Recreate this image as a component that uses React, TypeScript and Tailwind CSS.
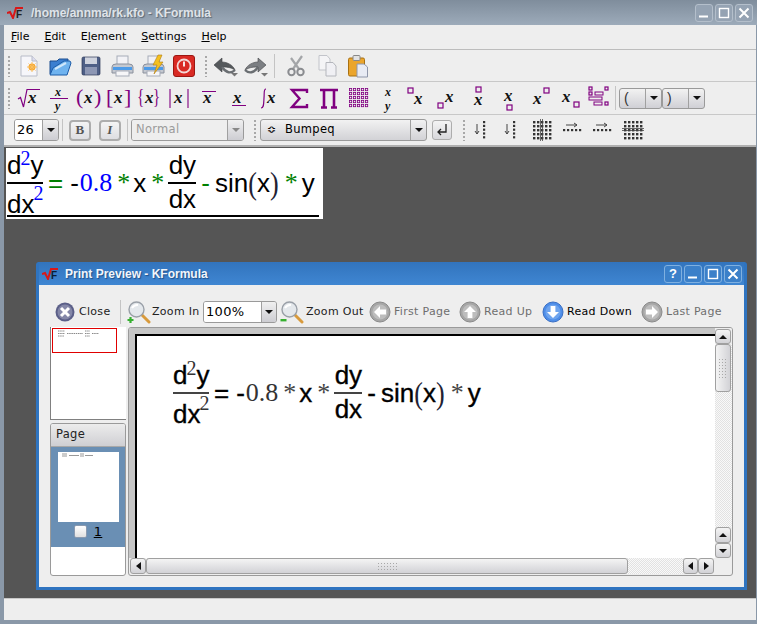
import React from "react";

const UI = { fontFamily: '"DejaVu Sans", sans-serif' };
const PURPLE = "#800080";

function X({ x, y, s = 17 }: { x: number; y: number; s?: number }) {
  return (
    <text x={x} y={y} fontFamily="Liberation Serif, serif" fontStyle="italic" fontWeight="bold" fontSize={s} fill="#111">
      x
    </text>
  );
}
function Sv({ children, w = 24, h = 24 }: { children: React.ReactNode; w?: number; h?: number }) {
  return (
    <svg width={w} height={h} viewBox={`0 0 ${w} ${h}`} className="overflow-visible shrink-0">
      {children}
    </svg>
  );
}
function Box({ x, y, s = 5 }: { x: number; y: number; s?: number }) {
  return <rect x={x} y={y} width={s} height={s} fill="none" stroke={PURPLE} strokeWidth="1.2" />;
}

function Logo({ light }: { light?: boolean }) {
  return (
    <svg width="17" height="12" viewBox="0 0 17 12" className="shrink-0">
      <path d="M0 6 L3 5 L6 11 L9 1 H16" fill="none" stroke="#d81818" strokeWidth="2" />
      <text x="9" y="11" fontFamily="Liberation Sans, sans-serif" fontWeight="bold" fontSize="10" fill={light ? "#0b1d33" : "#222"}>
        F
      </text>
    </svg>
  );
}

function NewDoc() {
  return (
    <Sv>
      <path d="M4 2 H15 L20 7 V22 H4 Z" fill="#f6f6fa" stroke="#b8bcc8" />
      <path d="M15 2 V7 H20" fill="#dde" stroke="#b8bcc8" />
      <circle cx="15" cy="13" r="3.5" fill="#f6a530" />
      <path d="M15 8 V18 M10 13 H20 M11.5 9.5 L18.5 16.5 M18.5 9.5 L11.5 16.5" stroke="#f9c060" strokeWidth="1" />
    </Sv>
  );
}
function Folder() {
  return (
    <Sv>
      <path d="M2 20 V7 H9 L11 5 H20 V9" fill="#3b7fd0" stroke="#1d4f90" />
      <path d="M22 7 L16 7 L5 14 L2 21 H19 L23 9 Z" fill="#6fb3ef" stroke="#1d5ca8" />
      <path d="M7 15 L18 9" stroke="#cfe7fb" strokeWidth="2" />
    </Sv>
  );
}
function Floppy() {
  return (
    <Sv>
      <rect x="3" y="3" width="18" height="18" rx="1.5" fill="#4e5f86" />
      <rect x="6" y="3" width="12" height="7" fill="#cfd3de" />
      <rect x="6" y="13" width="12" height="8" fill="#8d97b4" />
      <rect x="3" y="3" width="18" height="18" rx="1.5" fill="none" stroke="#2d3858" strokeWidth=".7" />
    </Sv>
  );
}
function Printer() {
  return (
    <>
      <rect x="7" y="2" width="11" height="9" fill="#f2f2f6" stroke="#a6acb8" />
      <path d="M2 13 Q2 10 6 10 H19 Q23 10 23 13 V19 H2 Z" fill="#c4c8d0" stroke="#8a909c" />
      <rect x="3" y="13" width="19" height="3" fill="#4d9be8" />
      <rect x="6" y="17" width="13" height="5" fill="#f6f6f8" stroke="#a6acb8" />
    </>
  );
}
function Power() {
  return (
    <Sv>
      <rect x="1.5" y="1.5" width="21" height="21" rx="2.5" fill="#d92a24" stroke="#9b1713" />
      <circle cx="12" cy="12" r="6.5" fill="none" stroke="#f3d8d6" strokeWidth="1.8" />
      <path d="M12 7.5 V12.5" stroke="#f6e5e4" strokeWidth="2" />
    </Sv>
  );
}
function Undo({ flip }: { flip?: boolean }) {
  return (
    <Sv w={26}>
      <g transform={flip ? "translate(26 0) scale(-1 1) translate(3 0)" : ""}>
        <path d="M1 11 L9 4 V8 C14 8 20 11 22 16 C17 13 13 13 9 13 V18 Z" fill={flip ? "#7c7f83" : "#55595c"} stroke="#3f4245" strokeWidth=".6" />
        <path d="M9 13 C13 19 18 20 22 16" fill="none" stroke="#6a6e72" strokeWidth="2.4" />
      </g>
      <path d={flip ? "M17 19 h7 l-3.5 3.5z" : "M18 19 h7 l-3.5 3.5z"} fill="#777" />
    </Sv>
  );
}
function Scissors() {
  return (
    <Sv>
      <path d="M18 2 L9 15 M7 4 L15 15" stroke="#a3a5a8" strokeWidth="2.2" />
      <circle cx="7.5" cy="18" r="3.2" fill="none" stroke="#8a8c90" strokeWidth="2" />
      <circle cx="16.5" cy="18" r="3.2" fill="none" stroke="#8a8c90" strokeWidth="2" />
    </Sv>
  );
}
function Copy() {
  return (
    <Sv>
      <path d="M4 1.5 H12 L15 5 V16 H4 Z" fill="#f4f4f6" stroke="#c2c4ca" />
      <path d="M11 8.5 H18 L21 12 V22 H11 Z" fill="#f0f0f4" stroke="#b4b6bc" />
    </Sv>
  );
}
function Paste() {
  return (
    <Sv>
      <rect x="2.5" y="4" width="16" height="18" rx="1.5" fill="#eba52c" stroke="#a87112" />
      <rect x="7" y="1.5" width="7" height="5" rx="1" fill="#e2e2e2" stroke="#888" />
      <path d="M11 10 H18 L21.5 13 V23 H11 Z" fill="#e8ebf4" stroke="#8f96aa" />
    </Sv>
  );
}
function Sqrt() {
  return (
    <Sv>
      <path d="M1 13 L3.5 11.5 L6.5 21 L10 3.5 H23" fill="none" stroke={PURPLE} strokeWidth="1.2" />
      <X x={11} y={17} />
    </Sv>
  );
}
function Frac({ inner }: { inner?: boolean }) {
  return (
    <Sv>
      <text x="8" y="10" fontFamily="Liberation Serif, serif" fontStyle="italic" fontWeight="bold" fontSize="12" fill="#111">x</text>
      {!inner && <rect x="3" y="12" width="18" height="1" fill={PURPLE} />}
      <text x="8" y="24" fontFamily="Liberation Serif, serif" fontStyle="italic" fontWeight="bold" fontSize="12" fill="#111">y</text>
    </Sv>
  );
}
function Wrap({ l, r }: { l: string; r: string }) {
  return (
    <Sv>
      <text x="-1" y="18" fontFamily="Liberation Serif, serif" fontSize="22" fill={PURPLE}>{l}</text>
      <X x={7} y={17} />
      <text x="17" y="18" fontFamily="Liberation Serif, serif" fontSize="22" fill={PURPLE}>{r}</text>
    </Sv>
  );
}
function Braces() {
  return (
    <Sv>
      <text transform="translate(0 17) scale(1 1.4)" fontFamily="Liberation Serif, serif" fontSize="15" fill={PURPLE}>{"{"}</text>
      <X x={8} y={17} />
      <text transform="translate(16 17) scale(1 1.4)" fontFamily="Liberation Serif, serif" fontSize="15" fill={PURPLE}>{"}"}</text>
    </Sv>
  );
}
function Abs() {
  return (
    <Sv>
      <path d="M3 3 V22 M21 3 V22" stroke={PURPLE} strokeWidth="1.1" />
      <X x={7} y={17} />
    </Sv>
  );
}
function Over({ under }: { under?: boolean }) {
  return (
    <Sv>
      <X x={6} y={17} s={17} />
      <rect x="5" y={under ? 19 : 5} width="14" height="1" fill={PURPLE} />
    </Sv>
  );
}
function Integral() {
  return (
    <Sv>
      <path d="M9 3 C6.5 3 7.5 6 7 12 C6.6 18 7 22 4 22" fill="none" stroke={PURPLE} strokeWidth="1.2" />
      <X x={10} y={17} />
    </Sv>
  );
}
function Sum() {
  return (
    <Sv>
      <path d="M20 7 V4 H5 L12.5 12.5 L5 21 H20 V18" fill="none" stroke={PURPLE} strokeWidth="2.4" />
    </Sv>
  );
}
function Prod() {
  return (
    <Sv>
      <path d="M3 4 H21 M7 4 V21 M17 4 V21 M4 21.5 H10 M14 21.5 H20" fill="none" stroke={PURPLE} strokeWidth="2.6" />
    </Sv>
  );
}
function Matrix() {
  const cells: React.ReactNode[] = [];
  for (let r = 0; r < 5; r++) for (let c = 0; c < 5; c++) cells.push(<rect key={r + "-" + c} x={2.5 + c * 4} y={2.5 + r * 4} width="2.2" height="2.2" fill="none" stroke={PURPLE} strokeWidth=".8" />);
  return <Sv>{cells}</Sv>;
}
function XPos({ bx, by, tx = 7, ty = 17 }: { bx: number; by: number; tx?: number; ty?: number }) {
  return (
    <Sv>
      <X x={tx} y={ty} />
      <Box x={bx} y={by} />
    </Sv>
  );
}
function MultiLine() {
  return (
    <Sv>
      <g>
        <Box x={2} y={1} s={3} />
        <Box x={2} y={6} s={3} />
        <rect x="2" y="11" width="13" height="3" fill="none" stroke={PURPLE} />
        <rect x="8" y="6" width="8" height="3" fill="none" stroke={PURPLE} />
        <Box x={18} y={1} s={3} />
        <rect x="7" y="16" width="8" height="3" fill="none" stroke={PURPLE} />
        <Box x={18} y={16} s={3} />
      </g>
    </Sv>
  );
}

function Dots({ cols, rows, x, y, step = 3.4, size = 2 }: { cols: number; rows: number; x: number; y: number; step?: number; size?: number }) {
  const out: React.ReactNode[] = [];
  for (let r = 0; r < rows; r++) for (let c = 0; c < cols; c++) out.push(<rect key={r + "-" + c} x={x + c * step} y={y + r * step} width={size} height={size} fill="#333" />);
  return <>{out}</>;
}
function DownCol() {
  return (
    <Sv>
      <path d="M8 6 V16 M6 13 L8 16 L10 13" fill="none" stroke="#444" />
      <Dots cols={1} rows={5} x={14} y={3} step={3.8} size={2.2} />
    </Sv>
  );
}
function Grid5({ mid }: { mid?: "v" | "h" }) {
  return (
    <Sv>
      <Dots cols={5} rows={5} x={3} y={3} step={4} size={2.4} />
      {mid === "v" && <path d="M10.5 1 V23 M12.5 1 V23" stroke="#444" strokeWidth=".8" />}
      {mid === "h" && <path d="M1 10.5 H23 M1 12.5 H23" stroke="#444" strokeWidth=".8" />}
    </Sv>
  );
}
function RightRow() {
  return (
    <Sv>
      <path d="M6 7 H17 M14 5 L17 7 L14 9" fill="none" stroke="#444" />
      <Dots cols={5} rows={1} x={3} y={11} step={4} size={2.2} />
    </Sv>
  );
}

function Grip() {
  return <div className="w-[4px] h-[22px] shrink-0 bg-[radial-gradient(circle,#a8a8a8_0.8px,transparent_1px)] bg-[length:4px_4px]" />;
}
function Sep({ h = "h-[24px]" }: { h?: string }) {
  return <div className={`w-px bg-[#c4c4c4] shrink-0 ${h}`} />;
}
function Cell({ children, w = "w-[30px]" }: { children: React.ReactNode; w?: string }) {
  return <div className={`${w} flex justify-center items-center shrink-0`}>{children}</div>;
}
function Tri({ dir = "down", c = "#111" }: { dir?: "down" | "up" | "left" | "right"; c?: string }) {
  const d = { down: "M0 0 H8 L4 4 Z", up: "M0 4 H8 L4 0 Z", left: "M5 0 V8 L0 4 Z", right: "M0 0 V8 L5 4 Z" }[dir];
  const s = dir === "left" || dir === "right" ? [5, 8] : [8, 4];
  return (
    <svg width={s[0]} height={s[1]} viewBox={`0 0 ${s[0]} ${s[1]}`}>
      <path d={d} fill={c} />
    </svg>
  );
}
function WinBtn({ children, dialog }: { children: React.ReactNode; dialog?: boolean }) {
  return (
    <div className={`w-[18px] h-[18px] rounded-[3px] border flex items-center justify-center ${dialog ? "border-[#7fb0e0] bg-[#3b80c9]" : "border-[#b4bfcb] bg-[#95a3b3]"}`}>
      {children}
    </div>
  );
}
function Btn3({ kind }: { kind: "min" | "max" | "close" | "help" }) {
  if (kind === "help") return <span className="text-white font-bold text-[13px] leading-none" style={{ fontFamily: "Liberation Sans" }}>?</span>;
  return (
    <svg width="12" height="12" viewBox="0 0 12 12">
      {kind === "min" && <rect x="1" y="8.5" width="9" height="2" fill="#fff" />}
      {kind === "max" && <rect x="1.5" y="1.5" width="9" height="9" fill="none" stroke="#fff" strokeWidth="1.4" />}
      {kind === "close" && <path d="M1.5 1.5 L10.5 10.5 M10.5 1.5 L1.5 10.5" stroke="#fff" strokeWidth="2" />}
    </svg>
  );
}
function Combo({ w, text, arrowW = "w-[16px]", disabled, textClass = "text-[13px]" }: { w: string; text: string; arrowW?: string; disabled?: boolean; textClass?: string }) {
  return (
    <div className={`${w} h-[22px] shrink-0 flex border border-[#9a9a9a] rounded-[3px] overflow-hidden`}>
      <div className={`flex-1 px-[2px] flex items-center ${disabled ? "bg-[#eeeeee] text-[#9a9a9a]" : "bg-white text-black"} ${textClass}`}>{text}</div>
      <div className={`${arrowW} border-l border-[#a0a0a0] flex items-center justify-center bg-gradient-to-b from-[#f0f0f0] to-[#cdcdd2]`}>
        <Tri c={disabled ? "#888" : "#111"} />
      </div>
    </div>
  );
}
function ParenCombo({ ch, color }: { ch: string; color: string }) {
  return (
    <div className="w-[43px] h-[21px] shrink-0 flex border border-[#9a9a9a] rounded-[3px] overflow-hidden bg-gradient-to-b from-[#f2f2f2] to-[#d0d0d5]">
      <div className={`flex-1 pl-[4px] flex items-center text-[14px] ${color}`} style={{ fontFamily: "Liberation Sans" }}>{ch}</div>
      <div className="w-[16px] border-l border-[#a0a0a0] flex items-center justify-center">
        <Tri />
      </div>
    </div>
  );
}
function FmtBtn({ ch, italic }: { ch: string; italic?: boolean }) {
  return (
    <div className={`w-[22px] h-[21px] shrink-0 rounded-[4px] border-2 border-[#adadad] bg-gradient-to-b from-[#f4f4f4] to-[#dedee2] flex items-center justify-center text-[13px] font-bold text-[#555] ${italic ? "italic" : ""}`} style={{ fontFamily: "Liberation Serif" }}>
      {ch}
    </div>
  );
}

function Formula({ print }: { print?: boolean }) {
  const num = print ? "text-[#333]" : "text-[#0000ff]";
  const op = print ? "text-black" : "text-[#008000]";
  const star = print ? "text-[#444]" : "text-[#008000]";
  const stroke = print ? "[-webkit-text-stroke:0.35px_black]" : "";
  const sans = { fontFamily: '"Liberation Sans", sans-serif' };
  const serif = { fontFamily: '"Liberation Serif", serif' };
  const Star = ({ ml }: { ml: string }) => (
    <span className={`${ml} ${star} leading-[30px]`} style={serif}>*</span>
  );
  return (
    <div className="h-[70px] flex items-center text-[26px] tracking-normal text-black" style={sans}>
      <div className={`w-[36px] flex flex-col ${stroke}`}>
        <div className="h-[34px] flex items-end pb-[2px] leading-[30px] whitespace-nowrap">
          <span>d</span>
          <span className={`text-[20px] leading-none -ml-[1px] relative -top-[12px] [-webkit-text-stroke:0] ${num}`} style={serif}>2</span>
          <span>y</span>
        </div>
        <div className={`h-[1.5px] ${print ? "bg-[#444]" : "bg-black"}`} />
        <div className="h-[34px] flex items-start pt-[5px] leading-[30px] whitespace-nowrap">
          <span>dx</span>
          <span className={`text-[20px] leading-none -ml-[1px] relative -top-[6px] [-webkit-text-stroke:0] ${num}`} style={serif}>2</span>
        </div>
      </div>
      <span className={`ml-[5px] leading-[30px] ${op} ${stroke}`}>=</span>
      <span className={`ml-[7px] leading-[30px] ${stroke}`}>-</span>
      <span className={`ml-[1px] leading-[30px] ${num}`} style={serif}>0.8</span>
      <Star ml="ml-[5px]" />
      <span className={`ml-[3px] leading-[30px] ${stroke}`}>x</span>
      <Star ml="ml-[5px]" />
      <div className={`ml-[4px] w-[28px] flex flex-col items-center ${stroke}`}>
        <div className="h-[34px] flex items-end pb-[2px] leading-[30px]">dy</div>
        <div className={`h-[1.5px] w-full ${print ? "bg-[#444]" : "bg-black"}`} />
        <div className="h-[34px] flex items-start leading-[30px]">dx</div>
      </div>
      <span className={`ml-[5px] leading-[30px] ${op} ${stroke}`}>-</span>
      <span className="ml-[5px] leading-[30px] whitespace-nowrap">
        <span className={stroke}>sin</span>
        <span className="inline-block scale-y-125 [-webkit-text-stroke:0] text-[#223]" style={serif}>(</span>
        <span className={stroke}>x</span>
        <span className="inline-block scale-y-125 [-webkit-text-stroke:0] text-[#223]" style={serif}>)</span>
      </span>
      <Star ml="ml-[6px]" />
      <span className={`ml-[4px] leading-[30px] ${stroke}`}>y</span>
    </div>
  );
}

function Magnifier({ plus }: { plus?: boolean }) {
  return (
    <svg width="24" height="24" viewBox="0 0 24 24" className="shrink-0">
      <path d="M14 14 L22 22" stroke="#d89a3c" strokeWidth="3" strokeLinecap="round" />
      <circle cx="9.5" cy="9.5" r="7.5" fill="#e4e8ec" stroke="#9aa0a8" strokeWidth="1.4" />
      <path d="M5 8 Q7 4.5 11 5" stroke="#fff" strokeWidth="2" fill="none" />
      {plus ? <path d="M3.5 17 V23 M0.5 20 H6.5" stroke="#36b030" strokeWidth="2.2" /> : <rect x="0.5" y="19" width="6" height="2.4" fill="#36b030" />}
    </svg>
  );
}
function NavIcon({ dir, active }: { dir: "left" | "up" | "down" | "right"; active?: boolean }) {
  const rot = { left: 0, up: 90, right: 180, down: 270 }[dir];
  return (
    <svg width="22" height="22" viewBox="0 0 22 22" className="shrink-0">
      <circle cx="11" cy="11" r="10" fill={active ? "#4d8de8" : "#a6a6a6"} stroke={active ? "#3a6fc4" : "#8a8a8a"} strokeWidth="1" />
      <circle cx="11" cy="11" r="7.6" fill={active ? "#6ea4ee" : "#bdbdbd"} />
      <path d="M5 11 L11 5 V8.6 H17 V13.4 H11 V17 Z" fill="#fff" transform={`rotate(${rot} 11 11)`} />
    </svg>
  );
}
function NavItem({ dir, label, active, ml, w }: { dir: "left" | "up" | "down" | "right"; label: string; active?: boolean; ml: string; w: string }) {
  return (
    <div className={`flex items-center gap-[3px] shrink-0 ${ml}`}>
      <NavIcon dir={dir} active={active} />
      <span className={`${w} shrink-0 text-[11px] tracking-[0.3px] whitespace-nowrap ${active ? "text-black" : "text-[#6e6e6e]"}`}>{label}</span>
    </div>
  );
}
function ScrollBtn({ dir, cls }: { dir: "up" | "down" | "left" | "right"; cls: string }) {
  return (
    <div className={`${cls} shrink-0 border border-[#a0a0a0] rounded-[3px] bg-gradient-to-b from-[#f4f4f4] to-[#d2d2d6] flex items-center justify-center`}>
      <Tri dir={dir} />
    </div>
  );
}
const DITHER = "bg-[repeating-conic-gradient(#e2e2e2_0_25%,#f9f9f9_0_50%)] bg-[length:2px_2px]";

function MiniFormula() {
  return (
    <svg width="42" height="7" viewBox="0 0 42 7" className="block">
      <path d="M1 1 h7 M1 3.5 h7 M1 6 h6 M10 3.5 h16 M28 1 h5 M28 3.5 h5 M28 6 h5 M35 3.5 h7" stroke="#888" strokeWidth="1" strokeDasharray="1.5 .7" />
    </svg>
  );
}

export default function App() {
  return (
    <div className="w-[761px] h-[626px] bg-white overflow-hidden text-[11px] tracking-[0.3px] text-black" style={UI}>
      <div className="w-[757px] h-[624px] flex flex-col bg-[#8a98a8] pb-[4px]">
        {/* title bar */}
        <div className="h-[25px] shrink-0 flex items-center pl-[7px] pr-[4px] bg-gradient-to-b from-[#7f8d9c] to-[#9dabba]">
          <Logo />
          <span className="ml-[7px] text-[12px] tracking-normal font-bold text-[#dfe3e8] [text-shadow:1px_1px_1px_#5c6875] whitespace-nowrap" style={{ fontFamily: '"Liberation Sans", sans-serif' }}>
            /home/annma/rk.kfo - KFormula
          </span>
          <div className="ml-auto flex gap-[2px]">
            <WinBtn><Btn3 kind="min" /></WinBtn>
            <WinBtn><Btn3 kind="max" /></WinBtn>
            <WinBtn><Btn3 kind="close" /></WinBtn>
          </div>
        </div>

        <div className="flex-1 min-h-0 ml-[4px] mr-[1px] flex flex-col bg-[#eeeeee]">
          {/* menu */}
          <div className="h-[25px] shrink-0 flex items-center pl-[7px] gap-[15px] border-b border-[#bcbcbc] text-[11px] tracking-normal">
            <span><u>F</u>ile</span>
            <span><u>E</u>dit</span>
            <span>E<u>l</u>ement</span>
            <span><u>S</u>ettings</span>
            <span><u>H</u>elp</span>
          </div>

          {/* toolbar 1 */}
          <div className="h-[32px] shrink-0 flex items-center border-b border-[#c8c8c8]">
            <div className="ml-[3px] mr-[2px]"><Grip /></div>
            <div className="flex">
              <Cell w="w-[31px]"><NewDoc /></Cell>
              <Cell w="w-[31px]"><Folder /></Cell>
              <Cell w="w-[31px]"><Floppy /></Cell>
              <Cell w="w-[31px]"><Sv><Printer /></Sv></Cell>
              <Cell w="w-[31px]"><Sv><Printer /><path d="M17 1 L12 11 H16 L13 20 L22 8 H18 L21 1 Z" fill="#f4c020" stroke="#b07a10" strokeWidth=".6" /></Sv></Cell>
              <Cell w="w-[31px]"><Power /></Cell>
            </div>
            <div className="ml-[5px] mr-[2px]"><Grip /></div>
            <Cell w="w-[31px]"><Undo /></Cell>
            <Cell w="w-[31px]"><Undo flip /></Cell>
            <div className="ml-[2px]"><Sep /></div>
            <div className="ml-[5px] flex">
              <Cell w="w-[31px]"><Scissors /></Cell>
              <Cell w="w-[31px]"><Copy /></Cell>
              <Cell w="w-[31px]"><Paste /></Cell>
            </div>
          </div>

          {/* toolbar 2 */}
          <div className="h-[33px] shrink-0 flex items-center border-b border-[#c8c8c8]">
            <div className="ml-[3px] mr-[3px]"><Grip /></div>
            <Cell><Sqrt /></Cell>
            <Cell><Frac /></Cell>
            <Cell><Wrap l="(" r=")" /></Cell>
            <Cell><Wrap l="[" r="]" /></Cell>
            <Cell><Braces /></Cell>
            <Cell><Abs /></Cell>
            <Cell><Over /></Cell>
            <Cell><Over under /></Cell>
            <Cell><Integral /></Cell>
            <Cell><Sum /></Cell>
            <Cell><Prod /></Cell>
            <Cell><Matrix /></Cell>
            <Cell><Frac inner /></Cell>
            <Cell><XPos bx={1} by={2} tx={7} ty={18} /></Cell>
            <Cell><XPos bx={1} by={17} tx={8} ty={16} /></Cell>
            <Cell><XPos bx={9} by={1} tx={7} ty={19} /></Cell>
            <Cell><XPos bx={10} by={19} tx={7} ty={15} /></Cell>
            <Cell><XPos bx={17} by={2} tx={6} ty={18} /></Cell>
            <Cell><XPos bx={17} by={16} tx={5} ty={16} /></Cell>
            <Cell><MultiLine /></Cell>
            <div className="ml-[1px]"><Sep h="h-[24px]" /></div>
            <div className="ml-[3px] flex gap-0">
              <ParenCombo ch="(" color="text-[#333]" />
              <ParenCombo ch=")" color="text-[#333]" />
            </div>
          </div>

          {/* toolbar 3 */}
          <div className="h-[32px] shrink-0 flex items-center border-b-2 border-[#b0b0b0]">
            <div className="ml-[10px]"><Combo w="w-[45px]" text="26" /></div>
            <div className="ml-[3px]"><Sep h="h-[22px]" /></div>
            <div className="ml-[6px]"><FmtBtn ch="B" /></div>
            <div className="ml-[8px]"><FmtBtn ch="I" italic /></div>
            <div className="ml-[6px]"><Sep h="h-[22px]" /></div>
            <div className="ml-[3px]"><Combo w="w-[113px]" text="Normal" disabled textClass="text-[11.5px] pl-[4px]" /></div>
            <div className="ml-[9px]"><Grip /></div>
            <div className="ml-[3px] w-[167px] h-[22px] shrink-0 flex border border-[#9a9a9a] rounded-[3px] overflow-hidden bg-gradient-to-b from-[#f2f2f2] to-[#d2d2d6]">
              <div className="flex-1 flex items-center pl-[6px] text-[11.5px]">
                <span className="w-[18px] text-[11px]">≎</span>
                <span>Bumpeq</span>
              </div>
              <div className="w-[16px] border-l border-[#a0a0a0] flex items-center justify-center"><Tri /></div>
            </div>
            <div className="ml-[5px] w-[20px] h-[20px] shrink-0 border border-[#adadad] rounded-[3px] bg-gradient-to-b from-[#f4f4f4] to-[#d8d8dc] flex items-center justify-center">
              <svg width="14" height="14" viewBox="0 0 14 14">
                <path d="M11 1 V9 H3 M6 6 L3 9 L6 12" fill="none" stroke="#222" strokeWidth="1.3" />
              </svg>
            </div>
            <div className="ml-[10px]"><Grip /></div>
            <div className="flex">
              <Cell w="w-[30px]"><DownCol /></Cell>
              <Cell w="w-[30px]"><DownCol /></Cell>
              <Cell w="w-[31px]"><Grid5 mid="v" /></Cell>
              <Cell w="w-[30px]"><RightRow /></Cell>
              <Cell w="w-[30px]"><RightRow /></Cell>
              <Cell w="w-[31px]"><Grid5 mid="h" /></Cell>
            </div>
          </div>

          {/* canvas */}
          <div className="relative h-[451px] shrink-0 bg-[#555555] pl-[2px] pt-[1px]">
            <div className="relative w-[317px] h-[71px] bg-white pl-[1px] overflow-hidden">
              <Formula />
              <div className="absolute left-[1px] top-[67px] w-[312px] h-[1.5px] bg-black" />
            </div>

            {/* print preview dialog */}
            <div className="absolute left-[32px] top-[115px] w-[711px] h-[328px] flex flex-col bg-[#3a80cc] rounded-t-[3px] border-x-[3px] border-b-[3px] border-[#2f74c0]">
              <div className="h-[23px] shrink-0 flex items-center pl-[3px] pr-[2px] bg-gradient-to-b from-[#3274bd] to-[#3f86d2]">
                <Logo light />
                <span className="ml-[6px] text-[12px] tracking-normal font-bold text-[#f2f6fb] [text-shadow:1px_1px_1px_#1e4f8a] whitespace-nowrap" style={{ fontFamily: '"Liberation Sans", sans-serif' }}>
                  Print Preview - KFormula
                </span>
                <div className="ml-auto flex gap-[2px]">
                  <WinBtn dialog><Btn3 kind="help" /></WinBtn>
                  <WinBtn dialog><Btn3 kind="min" /></WinBtn>
                  <WinBtn dialog><Btn3 kind="max" /></WinBtn>
                  <WinBtn dialog><Btn3 kind="close" /></WinBtn>
                </div>
              </div>
              <div className="flex-1 min-h-0 bg-[#eeeeee] flex flex-col">
                {/* toolbar */}
                <div className="h-[42px] shrink-0 flex items-center pt-[12px] pl-[16px] text-[11px]">
                  <svg width="20" height="20" viewBox="0 0 20 20" className="shrink-0">
                    <circle cx="10" cy="10" r="9.5" fill="#5b5f88" />
                    <circle cx="10" cy="10" r="7.5" fill="#8487a8" />
                    <path d="M6 6 L14 14 M14 6 L6 14" stroke="#fff" strokeWidth="3" />
                  </svg>
                  <span className="ml-[4px] w-[33px] shrink-0 text-[#222]">Close</span>
                  <div className="ml-[8px]"><Sep h="h-[24px]" /></div>
                  <div className="ml-[6px]"><Magnifier plus /></div>
                  <span className="ml-[1px] w-[45px] shrink-0 whitespace-nowrap text-[#222]">Zoom In</span>
                  <div className="ml-[6px]"><Combo w="w-[74px]" text="100%" arrowW="w-[15px]" /></div>
                  <div className="ml-[3px]"><Magnifier /></div>
                  <span className="ml-[2px] w-[55px] shrink-0 whitespace-nowrap text-[#222]">Zoom Out</span>
                  <NavItem dir="left" label="First Page" w="w-[56px]" ml="ml-[8px]" />
                  <NavItem dir="up" label="Read Up" w="w-[49px]" ml="ml-[9px]" />
                  <NavItem dir="down" label="Read Down" w="w-[65px]" active ml="ml-[9px]" />
                  <NavItem dir="right" label="Last Page" w="w-[56px]" ml="ml-[9px]" />
                </div>
                {/* body */}
                <div className="flex-1 min-h-0 flex pl-[11px]">
                  <div className="w-[76px] shrink-0 flex flex-col">
                    <div className="h-[93px] shrink-0 bg-white border-l border-b border-[#808080] pl-[1px] pt-[1px]">
                      <div className="w-[65px] h-[25px] border border-[#e00000] pl-[4px] pt-[1px]">
                        <MiniFormula />
                      </div>
                    </div>
                    <div className="mt-[3px] h-[153px] shrink-0 bg-white border border-[#9a9a9a] rounded-[3px] overflow-hidden flex flex-col">
                      <div className="h-[23px] shrink-0 flex items-center pl-[5px] bg-gradient-to-b from-[#ececec] to-[#cfcfd3] border-b border-[#a8a8a8] text-[11.5px] text-[#222]">Page</div>
                      <div className="h-[100px] shrink-0 bg-[#6a8fb4] flex flex-col items-center pt-[5px]">
                        <div className="w-[61px] h-[70px] bg-white pl-[3px] pt-[1px]">
                          <svg width="34" height="5" viewBox="0 0 34 5" className="block">
                            <path d="M1 1 h5 M1 3 h5 M8 2.5 h10 M19 1 h4 M19 3 h4 M24 2.5 h8" stroke="#999" strokeWidth="1" />
                          </svg>
                        </div>
                        <div className="mt-[3px] flex items-center gap-[7px]">
                          <div className="w-[13px] h-[13px] rounded-[2px] border border-[#8a9ab0] bg-gradient-to-b from-white to-[#e0e0e0]" />
                          <span className="text-[13px] underline text-black leading-none">1</span>
                        </div>
                      </div>
                    </div>
                  </div>

                  {/* main view */}
                  <div className="ml-[2px] w-[605px] h-[249px] shrink-0 border border-[#9a9a9a] rounded-[3px] flex flex-col bg-[#eeeeee] overflow-hidden">
                    <div className="h-[230px] shrink-0 flex">
                      <div className="flex-1 min-w-0 bg-[#c6c6c6] pt-[6px] pl-[6px]">
                        <div className="h-full bg-white border-t-2 border-l-2 border-black pl-[36px] pt-[22px]">
                          <Formula print />
                        </div>
                      </div>
                      <div className="w-[17px] shrink-0 flex flex-col pt-[1px] bg-[#eeeeee]">
                        <ScrollBtn dir="up" cls="h-[15px] w-[16px]" />
                        <div className={`flex-1 min-h-0 flex flex-col ${DITHER}`}>
                          <div className="h-[48px] w-[16px] shrink-0 border border-[#a0a0a0] rounded-[3px] bg-gradient-to-r from-[#f4f4f4] to-[#d2d2d6] flex items-center justify-center">
                            <div className="w-[10px] h-[20px] bg-[radial-gradient(circle,#a8a8a8_0.7px,transparent_0.9px)] bg-[length:3px_3px]" />
                          </div>
                        </div>
                        <ScrollBtn dir="up" cls="h-[16px] w-[16px]" />
                        <ScrollBtn dir="down" cls="h-[15px] w-[16px]" />
                      </div>
                    </div>
                    <div className="h-[17px] shrink-0 flex pl-[1px]">
                      <ScrollBtn dir="left" cls="w-[16px] h-[16px]" />
                      <div className={`w-[537px] shrink-0 h-[16px] ${DITHER}`}>
                        <div className="w-[482px] h-[16px] border border-[#a0a0a0] rounded-[3px] bg-gradient-to-b from-[#f4f4f4] to-[#d2d2d6] flex items-center justify-center">
                          <div className="w-[20px] h-[9px] bg-[radial-gradient(circle,#a8a8a8_0.7px,transparent_0.9px)] bg-[length:3px_3px]" />
                        </div>
                      </div>
                      <ScrollBtn dir="left" cls="w-[15px] h-[16px]" />
                      <ScrollBtn dir="right" cls="w-[16px] h-[16px]" />
                    </div>
                  </div>
                </div>
              </div>
            </div>
          </div>

          {/* status bar */}
          <div className="flex-1 border-t border-[#c8c8c8] bg-[#eeeeee]" />
        </div>
      </div>
    </div>
  );
}
